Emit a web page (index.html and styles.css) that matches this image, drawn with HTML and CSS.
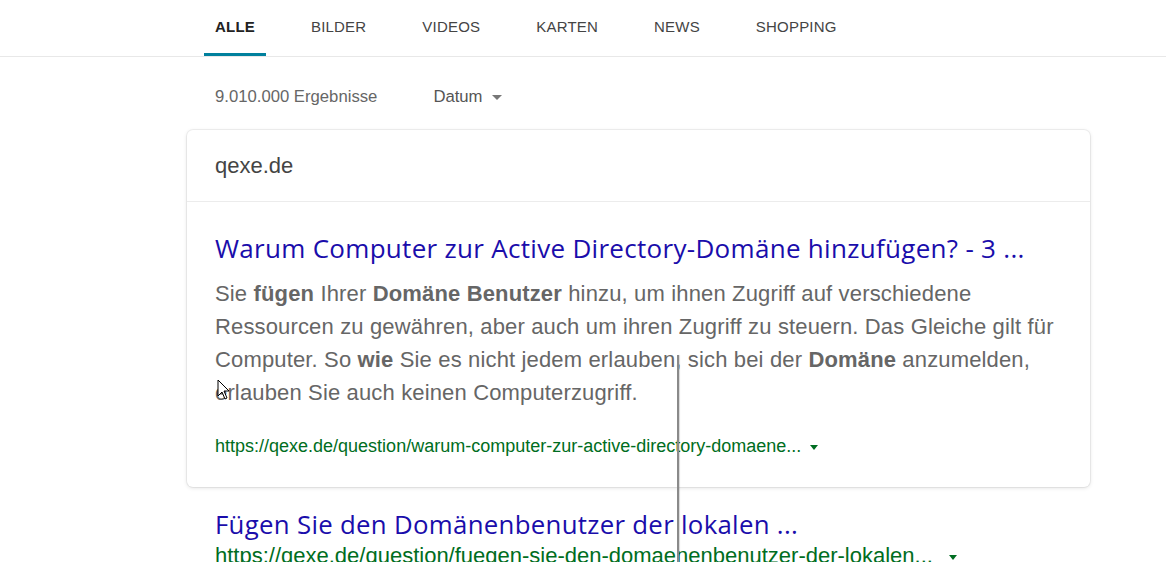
FILE: index.html
```html
<!DOCTYPE html>
<html lang="de">
<head>
<meta charset="utf-8">
<title>qexe.de - Suche</title>
<link rel="stylesheet" href="styles.css">
</head>
<body>
<nav class="tabs">
  <a class="tab active">ALLE</a>
  <a class="tab">BILDER</a>
  <a class="tab">VIDEOS</a>
  <a class="tab">KARTEN</a>
  <a class="tab">NEWS</a>
  <a class="tab">SHOPPING</a>
</nav>
<main class="results">
  <div class="meta">
    <span class="count">9.010.000 Ergebnisse</span>
    <span class="date">Datum <span class="caret"></span></span>
  </div>
  <section class="card">
    <header class="card-head">qexe.de</header>
    <div class="card-body">
      <h2 class="title">Warum Computer zur Active Directory-Domäne hinzufügen? - 3 ...</h2>
      <p class="snippet">Sie <b>fügen</b> Ihrer <b>Domäne Benutzer</b> hinzu, um ihnen Zugriff auf verschiedene Ressourcen zu gewähren, aber auch um ihren Zugriff zu steuern. Das Gleiche gilt für Computer. So <b>wie</b> Sie es nicht jedem erlauben, sich bei der <b>Domäne</b> anzumelden, erlauben Sie auch keinen Computerzugriff.</p>
      <div class="url">https://qexe.de/question/warum-computer-zur-active-directory-domaene... <span class="gcaret"></span></div>
    </div>
  </section>
  <section class="plain">
    <h2 class="title">Fügen Sie den Domänenbenutzer der lokalen ...</h2>
    <div class="url">https://qexe.de/question/fuegen-sie-den-domaenenbenutzer-der-lokalen... <span class="gcaret"></span></div>
  </section>
</main>
<div class="textcursor"></div>
<svg class="pointer" width="14" height="22" viewBox="0 0 14 22"><path d="M1 1 L1 17 L5 13 L8 20 L10 19 L7 12 L12 12 Z" fill="#fff" stroke="#000" stroke-width="1" stroke-linejoin="round"/></svg>
</body>
</html>
```
FILE: styles.css
```css
html, body {
  margin: 0;
  padding: 0;
  background: #fff;
  font-family: "Liberation Sans", Arial, sans-serif;
  overflow: hidden;
}
.tabs {
  display: flex;
  gap: 34px;
  height: 56px;
  padding-left: 204px;
  border-bottom: 1px solid #e8e8e8;
  box-sizing: content-box;
}
.tab {
  display: flex;
  align-items: center;
  padding: 0 11px;
  height: 53px;
  border-bottom: 3px solid transparent;
  font-size: 15px;
  letter-spacing: 0.2px;
  color: #444;
}
.tab.active {
  font-weight: bold;
  color: #222;
  border-bottom-color: #00809d;
}
.results {
  padding-left: 187px;
  width: 903px;
}
.meta {
  display: flex;
  align-items: center;
  gap: 56px;
  height: 32px;
  margin-top: 24px;
  padding-left: 28px;
  font-size: 16.7px;
  color: #666;
}
.date {
  display: flex;
  align-items: center;
  color: #555;
}
.caret {
  margin-left: 9px;
  width: 0;
  height: 0;
  border-left: 5px solid transparent;
  border-right: 5px solid transparent;
  border-top: 5px solid #777;
}
.card {
  margin-top: 17px;
  border-radius: 6px;
  box-shadow: 0 0 0 1px rgba(0,0,0,0.05), 0 1px 4px rgba(0,0,0,0.12);
  background: #fff;
}
.card-head {
  height: 72px;
  box-sizing: border-box;
  display: flex;
  align-items: center;
  padding-left: 28px;
  font-size: 22px;
  color: #444;
  border-bottom: 1px solid #ececec;
}
.card-body {
  padding: 30px 28px 29px;
}
.title {
  margin: 0;
  font-family: "Open Sans", "Noto Sans", sans-serif;
  font-weight: normal;
  font-size: 26px;
  letter-spacing: 0.3px;
  line-height: 32px;
  color: #1a0dab;
  white-space: nowrap;
}
.snippet {
  margin: 13px 0 0;
  font-size: 22px;
  letter-spacing: 0.15px;
  line-height: 33px;
  color: #666;
}
.snippet b {
  color: #666;
}
.url {
  margin-top: 25px;
  font-size: 18px;
  line-height: 24px;
  color: #006d21;
  white-space: nowrap;
}
.gcaret {
  display: inline-block;
  margin-left: 4px;
  vertical-align: middle;
  width: 0;
  height: 0;
  border-left: 4px solid transparent;
  border-right: 4px solid transparent;
  border-top: 5px solid #006d21;
}
.plain {
  padding: 19px 28px 0;
}
.plain .title {
  line-height: 36px;
  font-size: 25.8px;
}
.plain .url {
  margin-top: 0;
  font-size: 22px;
  line-height: 28px;
}
.plain .gcaret {
  margin-left: 10px;
}
.textcursor {
  position: absolute;
  left: 677px;
  top: 355px;
  width: 2px;
  height: 207px;
  background: #8a8a8a;
  box-shadow: 1px 0 1px rgba(0,0,0,0.15);
}
.pointer {
  position: absolute;
  left: 217px;
  top: 379px;
}
```
